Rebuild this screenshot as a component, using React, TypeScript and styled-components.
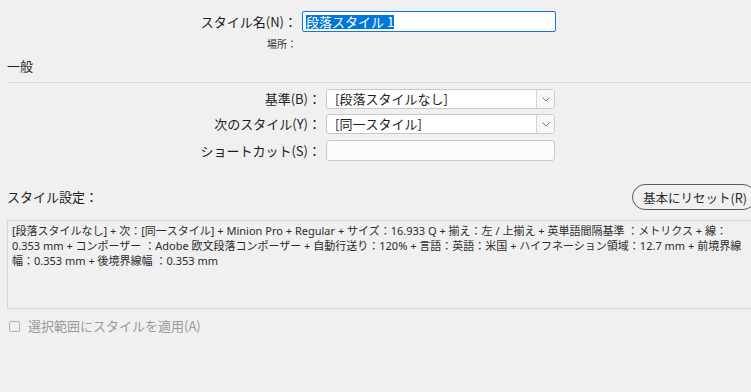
import React from 'react';
import styled, { createGlobalStyle } from 'styled-components';

const GlobalStyle = createGlobalStyle`
  html, body {
    margin: 0;
    background: #f0f0f0;
    overflow: hidden;
  }
  body {
    font-family: "Noto Sans CJK JP", "Noto Sans", sans-serif;
    color: #1e1e1e;
  }
`;

const Dialog = styled.div`
  width: 751px;
  height: 392px;
  padding: 11px 0 0 7px;
  box-sizing: border-box;
`;

const FieldRow = styled.div<{ $labelWidth: number; $mt?: number }>`
  display: grid;
  grid-template-columns: ${(p) => p.$labelWidth}px auto;
  column-gap: 5px;
  align-items: center;
  margin-top: ${(p) => p.$mt ?? 0}px;
`;

const Label = styled.label`
  text-align: right;
  font-size: 13px;
  line-height: 18px;
  white-space: nowrap;
`;

const SmallLabel = styled.span`
  text-align: right;
  font-size: 10px;
  line-height: 14px;
  color: #333;
`;

const NameInput = styled.div`
  width: 254px;
  height: 21px;
  box-sizing: border-box;
  border: 1.5px solid #1473e6;
  border-radius: 2px;
  background: #fff;
  padding: 0 3px;
  display: flex;
  align-items: center;
  font-size: 13px;
`;

const Selected = styled.span`
  background: #0078d7;
  color: #fff;
  line-height: 14px;
`;

const SelectBox = styled.div`
  width: 229px;
  height: 20px;
  box-sizing: border-box;
  border: 1px solid #c9c9c9;
  border-radius: 3px;
  background: #fff;
  display: flex;
  font-size: 13px;
`;

const SelectValue = styled.span`
  flex: 1;
  padding-left: 8px;
  line-height: 18px;
  white-space: nowrap;
`;

const SelectArrow = styled.span`
  width: 17px;
  border-left: 1px solid #d4d4d4;
  background: #f7f7f7;
  border-radius: 0 2px 2px 0;
  display: flex;
  align-items: center;
  justify-content: center;
`;

const TextBox = styled.div`
  width: 229px;
  height: 21px;
  box-sizing: border-box;
  border: 1px solid #c9c9c9;
  border-radius: 3px;
  background: #fbfbfb;
`;

const SectionTitle = styled.div`
  font-size: 13px;
  line-height: 18px;
  margin-top: 6px;
`;

const Divider = styled.hr`
  border: none;
  border-top: 1px solid #d9d9d9;
  margin: 7px 0 6px;
`;

const SettingsHeader = styled.div`
  display: flex;
  align-items: center;
  justify-content: space-between;
  margin-top: 23px;
  height: 26px;
`;

const ResetButton = styled.button`
  height: 26px;
  width: 124px;
  margin-right: -5px;
  box-sizing: border-box;
  border: 1px solid #5a5a5a;
  border-radius: 13px;
  background: #f0f0f0;
  font-family: inherit;
  font-size: 12.5px;
  color: #2a2a2a;
  text-align: left;
  white-space: nowrap;
  padding: 0 0 0 10px;
`;

const Summary = styled.div`
  margin-top: 10px;
  height: 89px;
  box-sizing: border-box;
  border: 1px solid #d6d6d6;
  border-right: none;
  padding: 2px 4px;
  font-family: "Noto Sans", "Noto Sans CJK JP", sans-serif;
  font-size: 11px;
  line-height: 15px;
  color: #2c2c2c;
  overflow: hidden;
`;

const SummaryLine = styled.div`
  white-space: nowrap;
`;

const CheckRow = styled.div`
  display: flex;
  align-items: center;
  gap: 8px;
  margin-top: 10px;
  padding-left: 2px;
  color: #9a9a9a;
  font-size: 13px;
  line-height: 14px;
`;

const CheckBox = styled.span`
  width: 11px;
  height: 11px;
  box-sizing: border-box;
  border: 1px solid #b0b0b0;
  border-radius: 2px;
`;

const summaryLines = [
  '[段落スタイルなし] + 次：[同一スタイル] + Minion Pro + Regular + サイズ：16.933 Q + 揃え：左 / 上揃え + 英単語間隔基準 ：メトリクス + 線：',
  '0.353 mm + コンポーザー ：Adobe 欧文段落コンポーザー + 自動行送り：120% + 言語：英語：米国 + ハイフネーション領域：12.7 mm + 前境界線',
  '幅：0.353 mm + 後境界線幅 ：0.353 mm',
];

const Chevron = () => (
  <svg width="8" height="5" viewBox="0 0 8 5">
    <polyline points="0.5,0.5 4,4 7.5,0.5" fill="none" stroke="#7a7a7a" strokeWidth="1" />
  </svg>
);

const Select = ({ value }: { value: string }) => (
  <SelectBox>
    <SelectValue>{value}</SelectValue>
    <SelectArrow>
      <Chevron />
    </SelectArrow>
  </SelectBox>
);

export default function App() {
  return (
    <>
      <GlobalStyle />
      <Dialog>
        <FieldRow $labelWidth={290}>
          <Label>スタイル名(N)：</Label>
          <NameInput>
            <Selected>段落スタイル 1</Selected>
          </NameInput>
        </FieldRow>
        <FieldRow $labelWidth={290} $mt={5}>
          <SmallLabel>場所：</SmallLabel>
          <span />
        </FieldRow>
        <SectionTitle>一般</SectionTitle>
        <Divider />
        <FieldRow $labelWidth={314}>
          <Label>基準(B)：</Label>
          <Select value="[段落スタイルなし]" />
        </FieldRow>
        <FieldRow $labelWidth={314} $mt={5}>
          <Label>次のスタイル(Y)：</Label>
          <Select value="[同一スタイル]" />
        </FieldRow>
        <FieldRow $labelWidth={314} $mt={6}>
          <Label>ショートカット(S)：</Label>
          <TextBox />
        </FieldRow>
        <SettingsHeader>
          <Label>スタイル設定：</Label>
          <ResetButton>基本にリセット(R)</ResetButton>
        </SettingsHeader>
        <Summary>
          {summaryLines.map((line) => (
            <SummaryLine key={line}>{line}</SummaryLine>
          ))}
        </Summary>
        <CheckRow>
          <CheckBox />
          選択範囲にスタイルを適用(A)
        </CheckRow>
      </Dialog>
    </>
  );
}
